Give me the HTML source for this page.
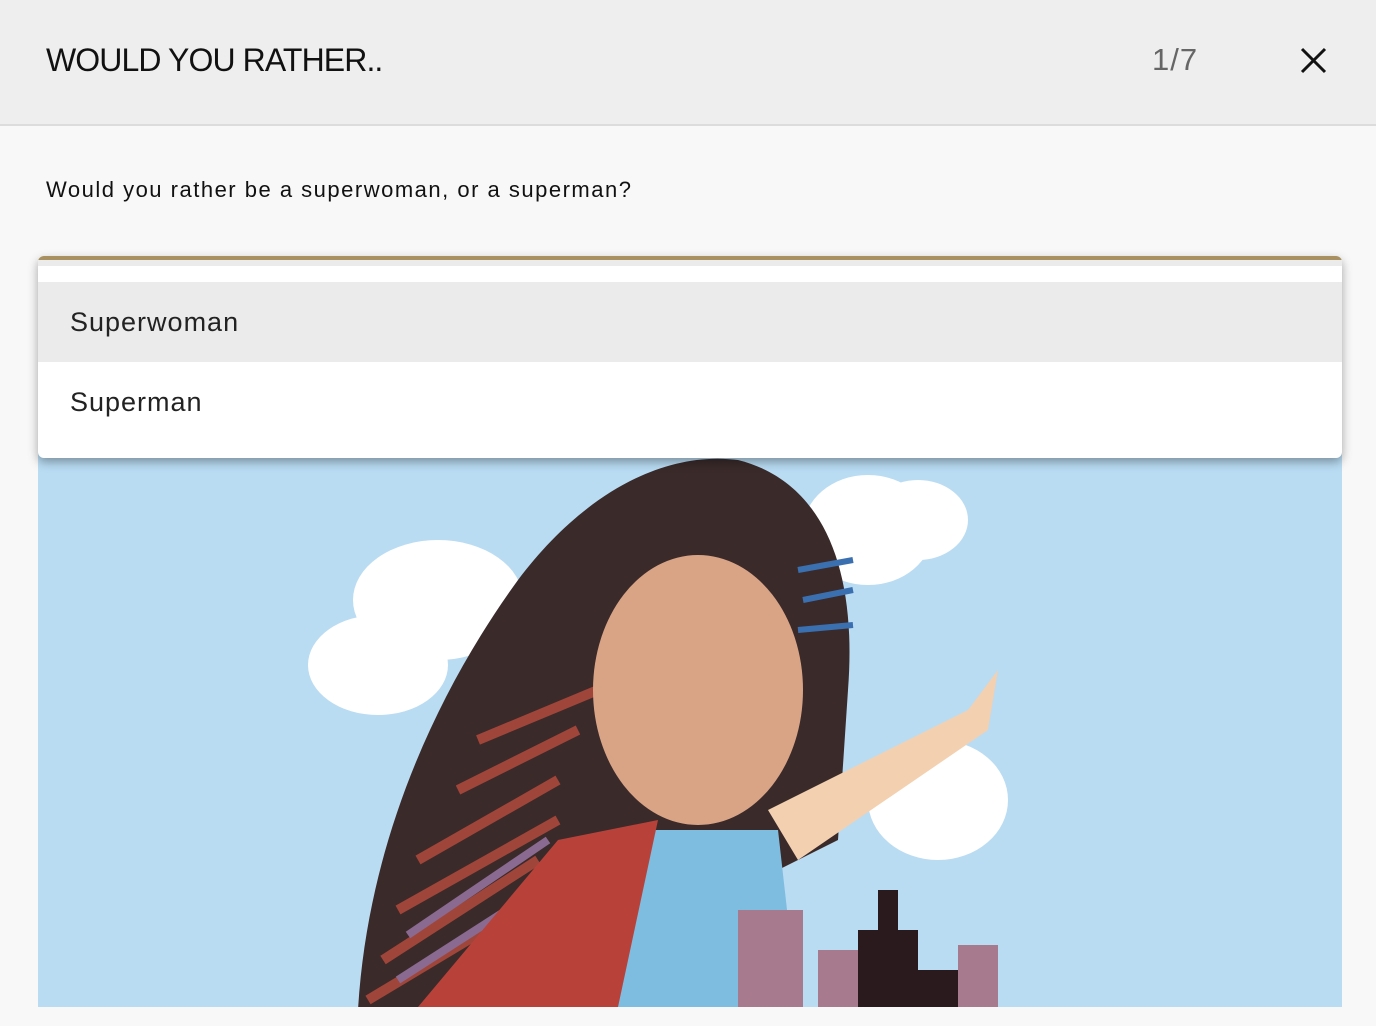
<!DOCTYPE html>
<html><head><meta charset="utf-8"><style>
body{margin:0;width:1376px;height:1026px;background:#f8f8f8;font-family:"Liberation Sans",sans-serif;overflow:hidden;position:relative}
.hdr{position:absolute;left:0;top:0;width:1376px;height:124px;background:#eeeeee;border-bottom:2px solid #dcdcdc}
.t{position:absolute;left:46px;top:42px;font-size:32px;color:#111;letter-spacing:-0.9px}
.n{position:absolute;left:1152px;top:42px;font-size:31px;color:#666;letter-spacing:1px}
.q{position:absolute;left:46px;top:177px;font-size:22px;color:#111;letter-spacing:1.5px}
.img{position:absolute;left:38px;top:440px;width:1304px;height:567px;background:#b9dcf3;overflow:hidden}
.sel{position:absolute;left:38px;top:256px;width:1304px;height:202px;background:#fff;border-radius:6px;box-shadow:0 4px 10px rgba(0,0,0,.35);overflow:hidden}
.gold{position:absolute;left:0;top:0;width:100%;height:4px;background:#a89060}
.gray{position:absolute;left:0;top:4px;width:100%;height:6px;background:#ebebeb}
.o{position:absolute;left:0;width:100%;height:80px;font-size:27px;color:#222;line-height:80px;text-indent:32px;letter-spacing:1px}
</style></head><body>
<div class="hdr"><div class="t">WOULD YOU RATHER..</div><div class="n">1/7</div>
<svg style="position:absolute;left:1300px;top:47px" width="27" height="27" viewBox="0 0 27 27"><path d="M2 2L25 25M25 2L2 25" stroke="#111" stroke-width="3"/></svg></div>
<div class="q">Would you rather be a superwoman, or a superman?</div>
<div class="img"><svg width="1304" height="567" viewBox="0 0 1304 567">
<g fill="#fff"><ellipse cx="400" cy="160" rx="85" ry="60"/><ellipse cx="340" cy="225" rx="70" ry="50"/><ellipse cx="830" cy="90" rx="65" ry="55"/><ellipse cx="880" cy="80" rx="50" ry="40"/><ellipse cx="900" cy="360" rx="70" ry="60"/></g>
<path d="M320 570 C330 400 400 250 480 140 C540 60 620 10 700 20 C780 40 820 120 810 250 L800 400 L600 500 L480 570Z" fill="#3a2a2a"/>
<path d="M330 560 L480 470 M345 520 L500 420 M360 470 L520 380 M380 420 L520 340 M420 350 L540 290 M440 300 L560 250" stroke="#a0453a" stroke-width="10"/>
<path d="M360 540 L500 450 M370 495 L510 400" stroke="#8a6a90" stroke-width="8"/>
<path d="M760 130 L815 120 M765 160 L815 150 M760 190 L815 185" stroke="#3a70b0" stroke-width="6"/>
<ellipse cx="660" cy="250" rx="105" ry="135" fill="#d9a486"/>
<path d="M730 370 L930 270 L960 230 L950 290 L760 420Z" fill="#f3d0b0"/>
<path d="M600 390 L740 390 L760 567 L560 567Z" fill="#7fbde0"/>
<path d="M520 400 L620 380 L580 567 L380 567Z" fill="#b8423a"/>
<g fill="#a87a8e"><rect x="700" y="470" width="65" height="97"/><rect x="780" y="510" width="40" height="57"/><rect x="920" y="505" width="40" height="62"/></g>
<g fill="#2a1a1e"><rect x="820" y="490" width="60" height="77"/><rect x="840" y="450" width="20" height="50"/><rect x="880" y="530" width="40" height="37"/></g>
</svg></div>
<div class="sel"><div class="gold"></div><div class="gray"></div>
<div class="o" style="top:26px;background:#ebebeb">Superwoman</div>
<div class="o" style="top:106px">Superman</div></div>
</body></html>
